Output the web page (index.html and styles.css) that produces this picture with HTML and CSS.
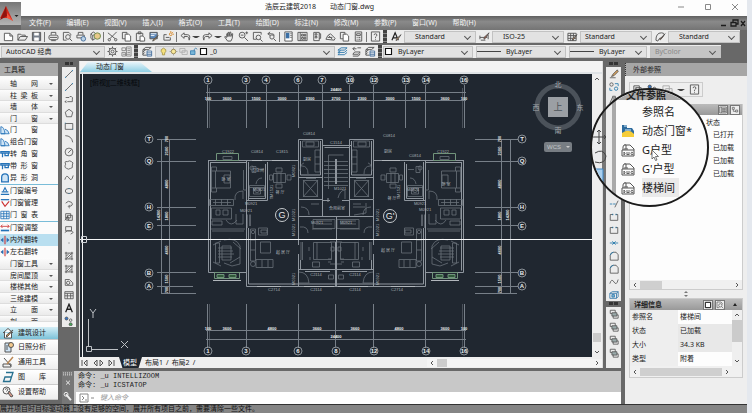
FILE: index.html
```html
<!DOCTYPE html>
<html lang="zh-CN">
<head>
<meta charset="utf-8">
<title>浩辰云建筑2018</title>
<link rel="stylesheet" href="styles.css">
</head>
<body>
<svg class="defs" aria-hidden="true">
<symbol id="new" viewBox="0 0 12 12"><path d="M1.5 2.5h6l3 3v5h-9zM7.5 2.5v3h3" fill="#fff"/></symbol>
<symbol id="open" viewBox="0 0 12 12"><path d="M1 10V3.500h3l1 1h4V6M1 10l2.500-4h8L9 10z"/></symbol>
<symbol id="save" viewBox="0 0 12 12"><path d="M1.500 1.500h9v9h-9z" fill="#77808c"/><path d="M3.500 2h5v3h-5zM3.500 7h5v3.500h-5z" fill="#fff" stroke="none"/></symbol>
<symbol id="print" viewBox="0 0 12 12"><path d="M3.500 4V1.500h5V4M3 4.500h6a2 2 0 0 1 2 2v1a2 2 0 0 1-2 2H3a2 2 0 0 1-2-2v-1a2 2 0 0 1 2-2zM2 7h8M3.500 10.500h5"/></symbol>
<symbol id="preview" viewBox="0 0 12 12"><path d="M5 10H1.500V1.500h6l2 2V5"/><circle cx="6.500" cy="6.500" r="2.500"/><path d="M8.500 8.500l2.500 2.500"/></symbol>
<symbol id="publish" viewBox="0 0 12 12"><path d="M2.500 4V1.500h5V4M1 4.500h8v3H1z"/><circle cx="8" cy="8.500" r="2.500" fill="#bcd2e6" stroke="#456f9c"/></symbol>
<symbol id="globe" viewBox="0 0 12 12"><path d="M1 3l3-2 2 2v5L3 10 1 8zM1 3l2 2v5M3 5l3-2"/><circle cx="8" cy="5.500" r="3.500" fill="#e8c98a" stroke="#6c8a4d"/></symbol>
<symbol id="cut" viewBox="0 0 12 12"><path d="M1 2l8 6.500M10.500 1L3 8.500"/><circle cx="2.500" cy="9.500" r="1.300"/><circle cx="9.500" cy="9.500" r="1.300"/></symbol>
<symbol id="copy" viewBox="0 0 12 12"><path d="M1.500 1.500h5v7h-5z"/><path d="M4.500 3.500h4l2 2v5.500h-6z" fill="#fff"/></symbol>
<symbol id="paste" viewBox="0 0 12 12"><path d="M1.500 2.500h7v8h-7zM3.500 1h3v2h-3z"/><path d="M5.500 5.500h3l2 2V11h-5z" fill="#fff"/></symbol>
<symbol id="match" viewBox="0 0 12 12"><path d="M1 1.500h8v7H1z" fill="#5a86b8"/><path d="M2 3h6M2 5h4" stroke="#fff"/><path d="M10 5L6 10l-2 1 1-2z" fill="#d99b4e"/></symbol>
<symbol id="block" viewBox="0 0 12 12"><path d="M4 4H1v6h7V7M3 7h4"/><circle cx="8.500" cy="3.500" r="1.500" stroke="#d98b2b"/><path d="M8.500 0v1.500M11 3.500h1M10 2l1-1" stroke="#d98b2b"/></symbol>
<symbol id="undo" viewBox="0 0 12 12"><path d="M4.500 2L1 5l3.500 3V6H8q2 0 2 4 2-6-2-6H4.500z"/></symbol>
<symbol id="redo" viewBox="0 0 12 12"><path d="M7.500 2L11 5 7.500 8V6H4Q2 6 2 10 0 4 4 4h3.500z"/></symbol>
<symbol id="pan" viewBox="0 0 12 12"><path d="M4 11L1 7V6l2 1V3l1-.5V6l.5-4.500h1V6L6.500 1l1 .5V6l1-3h1L9 8l-1.500 3z"/></symbol>
<symbol id="zoom" viewBox="0 0 12 12"><circle cx="4.500" cy="4.500" r="3.200"/><path d="M7 7l4 4M3 4.500h3M8 2h3M9.500.5v3"/></symbol>
<symbol id="zoomwin" viewBox="0 0 12 12"><path d="M10 4V1.500H1.500V9H5"/><circle cx="7" cy="7" r="2.500"/><path d="M9 9l2.500 2.500"/></symbol>
<symbol id="prev" viewBox="0 0 12 12"><path d="M4.500 1L2 3l2.500 2M2 3h4q3 0 3 2"/><circle cx="6.500" cy="6.500" r="2.300"/><path d="M8.500 8.500L11 11"/></symbol>
<symbol id="props" viewBox="0 0 12 12"><path d="M2 1h8v10H2z" fill="#fff"/><path d="M3 2h4v6H3z" fill="#3b6fa5" stroke="none"/><path d="M8 3h1.500M8 5h1.500M8 7h1.500"/></symbol>
<symbol id="grid" viewBox="0 0 12 12"><path d="M1 1.500h10v9H1zM3.500 1.500v9M5 3.500h2v2H5zM8 3.500h1.500v2H8zM5 7h2v2H5zM8 7h1.500v2H8z"/></symbol>
<symbol id="palette" viewBox="0 0 12 12"><path d="M3 1.500h6v9H3zM4.500 3h2v1.500h-2zM4.500 6h2v1.500h-2zM9 3h1.500v5H9"/></symbol>
<symbol id="sheet" viewBox="0 0 12 12"><path d="M1 9l2-4 3-2 5 5-1 2zM4 5l4 4M3 7h5"/></symbol>
<symbol id="calc" viewBox="0 0 12 12"><path d="M2.500 1h7v10h-7zM4 3h4v2H4zM4 7h1M6 7h2M4 9h1M6 9h2"/></symbol>
<symbol id="help" viewBox="0 0 12 12"><path d="M1.500 1h9v10h-9zM4.500 4.500q0-1.500 1.500-1.500t1.500 1.500Q7.500 5.500 6 6.500V7.500M6 8.500v1"/></symbol>
<symbol id="stylea" viewBox="0 0 12 12"><path d="M1 10L4.500 2 8 10M2 7.500h5" stroke="#222" stroke-width="1.300"/><path d="M11 4L7 9.500l-1.500 1 .5-2z" fill="#d89a61"/></symbol>
<symbol id="dim" viewBox="0 0 12 12"><path d="M1 9V5M1 7h8M10 4v5M2 10h5"/><path d="M11 2L7 8l-1.500 1V7z" fill="#b9583d"/></symbol>
<symbol id="tbl" viewBox="0 0 12 12"><path d="M1 2.500h9v8H1zM1 5h9M1 8h9M4 2.500v8M7 2.500v8"/><path d="M11 4L7 9.500l-1 1v-2z" fill="#d89a61"/></symbol>
<symbol id="leader" viewBox="0 0 12 12"><path d="M1 10q0-8 6-8 3 0 3 2Q8 9 5 8L3 11z"/><path d="M11 3L6 9.500 5 9z" fill="#b96b3d"/></symbol>
<symbol id="gear" viewBox="0 0 12 12"><circle cx="6" cy="6" r="3.800"/><circle cx="6" cy="6" r="1.600"/><path d="M6 .5v2M6 9.500v2M.5 6h2M9.500 6h2M2 2l1.500 1.500M8.500 8.500L10 10M10 2L8.500 3.500M2 10l1.500-1.500"/></symbol>
<symbol id="ws" viewBox="0 0 12 12"><path d="M1 2h4v3H1zM6 1h5v10H6zM1 7h4v4H1zM7 3h3M7 5h3M7 7h3M2 9h8" stroke="#888"/></symbol>
<symbol id="layers" viewBox="0 0 12 12"><path d="M1 4l3-2.500h6L7 4zM1 6.500L4 4M1 9l2-2M1 4v6h4"/><path d="M5.500 5.500h5v5.500h-5zM5.500 7.500h5M5.500 9.500h5" fill="#fff" stroke="#456f9c"/></symbol>
<symbol id="stack" viewBox="0 0 12 12"><path d="M1 4.500L4.500 2H11L8 4.500zM1 7l3-2M8 7l3-2.500M1 7h7M1 9.500h7L11 7M1 9.500l2-2" stroke="#2f78ac"/></symbol>
<symbol id="stackp" viewBox="0 0 12 12"><path d="M4 1L2 3l2 2M2 3h4M4 6.500h6L8 9H2zM2 11h6l2-2.500M7 2h4"/></symbol>
<symbol id="bulb" viewBox="0 0 12 12"><path d="M4.500 8Q2 6 3 3.500q3-4 6 0Q10 6 7.500 8v2.500h-3z" fill="#f5e07c" stroke="#9b8b40"/></symbol>
<symbol id="sun" viewBox="0 0 12 12"><circle cx="6" cy="6" r="3" fill="#f8e79a" stroke="#87753b"/><path d="M6 1v1M6 10v1M1 6h1M10 6h1"/></symbol>
<symbol id="frz" viewBox="0 0 12 12"><path d="M1 2h7v5H1zM4 5h7v5H4z" stroke="#aaa"/></symbol>
<symbol id="lock" viewBox="0 0 12 12"><path d="M2 5h6v5H2z" fill="#77b5d8" stroke="#2f78ac"/><path d="M7 5V3q2-3 4 0" stroke="#2f78ac"/></symbol>
<symbol id="sq" viewBox="0 0 12 12"><path d="M2 2h8v8H2z" fill="#fff" stroke="#111" stroke-width="1.500"/></symbol>
<symbol id="tree" viewBox="0 0 12 12"><path d="M2 2h3v3H2zM7 6h3v3H7zM3.500 5v3H7"/></symbol>
<symbol id="line" viewBox="0 0 12 12"><path d="M2 10L10 2"/><path d="M1.500 10h1M9.500 2h1" stroke="#27a" stroke-width="1.500"/></symbol>
<symbol id="pline" viewBox="0 0 12 12"><path d="M2 3h4a2 2 0 0 1 4 2v3H4"/><path d="M3 7l-2 1 2 1"/></symbol>
<symbol id="poly" viewBox="0 0 12 12"><path d="M6 1.500l4.500 3.500L9 10.500H3L1.500 5z"/></symbol>
<symbol id="rect" viewBox="0 0 12 12"><path d="M1.500 3h9v7h-9z"/><path d="M1 2.500h1M10 10h1" stroke="#27a"/></symbol>
<symbol id="arc" viewBox="0 0 12 12"><path d="M1.500 2Q9 2 10.500 10"/></symbol>
<symbol id="circle" viewBox="0 0 12 12"><circle cx="6" cy="6" r="4.700"/><path d="M5 7l4-4"/></symbol>
<symbol id="cloud" viewBox="0 0 12 12"><path d="M2 5Q0 1 4 2q3-2 5 0 3 1 1 4 1 4-2 4-3 2-5 0-3-1-1-5z"/></symbol>
<symbol id="spline" viewBox="0 0 12 12"><path d="M1 8Q3 1 6 6t5-3"/></symbol>
<symbol id="ell" viewBox="0 0 12 12"><ellipse cx="6" cy="6" rx="4.500" ry="3"/><path d="M6 2.500v1M6 8.500v1" stroke="#27a"/></symbol>
<symbol id="ellarc" viewBox="0 0 12 12"><path d="M2 5q3-4 7-1 3 4-3 5M7 7L5 9l2 2"/></symbol>
<symbol id="ins" viewBox="0 0 12 12"><path d="M2 2h6v5H2zM4 4h6v6H5zM1 10l4-5"/><circle cx="4" cy="8" r="2"/></symbol>
<symbol id="mkb" viewBox="0 0 12 12"><path d="M2 2h7v5H2zM1 9l3-2h5l2 2-3 2"/></symbol>
<symbol id="dot" viewBox="0 0 12 12"><path d="M5.500 6h1" stroke-width="1.300"/></symbol>
<symbol id="hatch" viewBox="0 0 12 12"><path d="M1 2.500h10M1 9.500h10M2.500 1v10M9.500 1v10M3 6l3-3M3 9l6-6M6 9l3-3"/></symbol>
<symbol id="region" viewBox="0 0 12 12"><path d="M1.500 10V3h5l4 4v3z"/><circle cx="5" cy="7" r="2"/></symbol>
<symbol id="table" viewBox="0 0 12 12"><path d="M1 2h10v8.500H1zM1 4h10M1 7h10M4 4v6.500M8 4v6.500" /></symbol>
<symbol id="aa" viewBox="0 0 12 12"><path d="M2 11L6 1.500 10 11M3.500 7.500h5" stroke="#222" stroke-width="1.600"/></symbol>
<symbol id="pts" viewBox="0 0 12 12"><circle cx="3" cy="3" r="1.800" fill="#37c"/><circle cx="8" cy="5" r="1.500"/><circle cx="8" cy="10" r="1.800" fill="#4a5"/></symbol>
<symbol id="erase" viewBox="0 0 12 12"><path d="M10 1L5 6 3 9l3-1 5-5z" fill="#d9a25c"/><path d="M1 10.500h7"/></symbol>
<symbol id="cpy" viewBox="0 0 12 12"><circle cx="3" cy="3" r="2"/><circle cx="8.500" cy="8" r="2" stroke="#27a"/><path d="M7 2h4v3M1 7v3h3" stroke="#27a"/></symbol>
<symbol id="mir" viewBox="0 0 12 12"><path d="M5 1v9H1zM7 1v9h4z"/></symbol>
<symbol id="trim" viewBox="0 0 12 12"><path d="M1 6h3M5 6h3" stroke="#27a"/><path d="M11 2L7 10"/></symbol>
<symbol id="brk" viewBox="0 0 12 12"><path d="M5 3H1.500v7h9V3H8"/><path d="M4 3h1M8 3h1" stroke="#27a" stroke-width="2"/></symbol>
<symbol id="join" viewBox="0 0 12 12"><path d="M1 6h10M4 4l2 2-2 2M8 4L6 6l2 2" stroke="#27a"/></symbol>
<symbol id="fil" viewBox="0 0 12 12"><path d="M1.500 11V5q1-3.500 4-3.500h3l2.500 3V11z"/><path d="M1.500 5q1-3.500 4-3.500" stroke="#27a"/></symbol>
<symbol id="cube" viewBox="0 0 12 12"><path d="M1 4l3-2h7v6l-2 2H1zM1 4h8v6M9 4l2-2" stroke="#37a"/><path d="M3.500 5.500h3v3h-3z" fill="#7bd" stroke="#37a"/></symbol>
<symbol id="ord" viewBox="0 0 12 12"><path d="M1.500 1.500h6v4h-6z"/><path d="M3.500 4.500h6v4h-6z" fill="#9aa"/><path d="M5 8v3h6V7H9.500"/></symbol>
<symbol id="door" viewBox="0 0 12 12"><path d="M1 10.500V2q4 0 5 8.500zM6 5q4 1 5 5.500H1" stroke="#2472b8" fill="#cfe4f5"/></symbol>
<symbol id="win" viewBox="0 0 12 12"><path d="M1 3h10v2H1zM3 5v5M6 5v3h4V5" stroke="#2472b8" stroke-width="1.500"/></symbol>
<symbol id="arch" viewBox="0 0 12 12"><path d="M2 10.500V5q0-4 4-4t4 4v5.500z" stroke="#2472b8" stroke-width="1.500" fill="#cfe4f5"/></symbol>
<symbol id="num" viewBox="0 0 12 12"><path d="M1 10h10M2 7h8M4 6l2-4 2 4" stroke="#2472b8" stroke-width="1.300"/></symbol>
<symbol id="chk" viewBox="0 0 12 12"><path d="M1 2h10" stroke="#2472b8" stroke-width="1.500"/><path d="M2 4l4 6 5-6" stroke="#c33" stroke-width="1.400"/></symbol>
<symbol id="wt" viewBox="0 0 12 12"><path d="M1 1.500h10v9H1zM1 4.500h10M1 7.500h10M4.500 1.500v9M8 1.500v9" stroke="#2472b8"/></symbol>
<symbol id="adj" viewBox="0 0 12 12"><path d="M1 4h10M3 2L1 4l2 2M9 2l2 2-2 2" stroke="#c33"/><path d="M1 9h10" stroke="#2472b8" stroke-width="2"/></symbol>
<symbol id="flip" viewBox="0 0 12 12"><path d="M6 1v10M1 6h3M8 6h3" stroke="#c33" stroke-width="1.300"/><path d="M4 3v6L1 6zM8 3v6l3-3z" fill="#2472b8" stroke="none"/></symbol>
<symbol id="house" viewBox="0 0 12 12"><path d="M1 6l5-4.500L11 6M2.500 5v6h7V5" fill="#fff"/><path d="M11 3L6 9l-1.500 1V8z" fill="#e2a04d"/></symbol>
<symbol id="sunl" viewBox="0 0 12 12"><path d="M3 2h6v9H3zM5 4v5" fill="#cfe4f5"/><circle cx="9" cy="4" r="2.500" fill="#f4c98c"/></symbol>
<symbol id="tool" viewBox="0 0 12 12"><path d="M1 8h8v3H1zM2 2l7 8"/><path d="M11 1L5 8" stroke="#b85" stroke-width="1.500"/></symbol>
<symbol id="lib" viewBox="0 0 12 12"><path d="M4 1.500h7L8 10.500H1.500L3 6h6" stroke="#27708f" stroke-width="1.300"/></symbol>
<symbol id="hlp" viewBox="0 0 12 12"><circle cx="4.500" cy="4.500" r="3.500"/><path d="M3 3.500q2-2 3 0l-1.500 2"/><path d="M7 5l4 5-2 1-3-4z" fill="#d98"/></symbol>
<symbol id="dwg" viewBox="0 0 14 14"><path d="M2 7V4q0-2 2-2V1M4 2h5l4 4v7H1V7h12M5 2v4M3 6h4"/><path d="M3 9v3M3 9q2 1.500 0 3M6 9v3l1-1 1 1V9M12 9.500q-2-1-2 1t2 1v-1" stroke-width=".9"/></symbol>
<symbol id="proj" viewBox="0 0 14 14"><path d="M1 1h5v3h5l2 3v6H1z" fill="#2d6b9d" stroke="none"/><path d="M1 9q7-5 12 1v3H1z" fill="#f6cd3a" stroke="none"/><path d="M3 2h3M4 6h6" stroke="#d9edf9"/></symbol>
</svg>

<div class="app">
<header class="head">
  <button class="logo" aria-label="A"><svg viewBox="0 0 21 24"><path d="M0 15L6 3l7 15-4-3z" fill="#d42a1c"/><path d="M6 3l1 10-7 4 4-9z" fill="#8f140f"/><path d="M7 10l6 8-6-3z" fill="#f5543c"/><path d="M14.500 12h4l-2 2z" fill="#222"/></svg></button>
  <div class="title"><span>浩辰云建筑2018</span><span>动态门窗.dwg</span>
    <div class="wctl"><button aria-label="最小化"><svg viewBox="0 0 8 8"><path d="M1 4h6"/></svg></button><button aria-label="最大化"><svg viewBox="0 0 8 8"><path d="M1.500 1.500h5v5h-5z"/></svg></button><button aria-label="关闭"><svg viewBox="0 0 8 8"><path d="M1 1l6 6M7 1L1 7"/></svg></button></div>
  </div>
  <nav class="menu"><div class="items"><button>文件(F)</button><button>编辑(E)</button><button>视图(V)</button><button>插入(I)</button><button>格式(O)</button><button>工具(T)</button><button>绘图(D)</button><button>标注(N)</button><button>修改(M)</button><button>参数(P)</button><button>窗口(W)</button><button>帮助(H)</button></div>
    <div class="dctl"><svg viewBox="0 0 28 8"><path d="M2 6.500h5M12 3.500h5v3.500h-5zM14 3V1h5v4h-2M22 2l4 5M26 2l-4 5"/></svg></div></nav>
</header>

<div class="bar one">
  <button class="ib" aria-label="新建"><svg><use href="#new"/></svg></button><button class="ib" aria-label="打开"><svg><use href="#open"/></svg></button><button class="ib" aria-label="保存"><svg><use href="#save"/></svg></button><i class="sep"></i>
  <button class="ib" aria-label="打印"><svg><use href="#print"/></svg></button><button class="ib" aria-label="预览"><svg><use href="#preview"/></svg></button><button class="ib" aria-label="发布"><svg><use href="#publish"/></svg></button><button class="ib" aria-label="三维"><svg><use href="#globe"/></svg></button><i class="sep"></i>
  <button class="ib" aria-label="剪切"><svg><use href="#cut"/></svg></button><button class="ib" aria-label="复制"><svg><use href="#copy"/></svg></button><button class="ib" aria-label="粘贴"><svg><use href="#paste"/></svg></button><button class="ib" aria-label="特性匹配"><svg><use href="#match"/></svg></button><button class="ib" aria-label="块编辑"><svg><use href="#block"/></svg></button><i class="sep"></i>
  <button class="ib" aria-label="放弃"><svg><use href="#undo"/></svg></button><b class="dd"></b><button class="ib" aria-label="重做"><svg><use href="#redo"/></svg></button><b class="dd"></b>
  <button class="ib" aria-label="平移"><svg><use href="#pan"/></svg></button><button class="ib" aria-label="缩放"><svg><use href="#zoom"/></svg></button><button class="ib" aria-label="窗口缩放"><svg><use href="#zoomwin"/></svg></button><button class="ib" aria-label="上一个"><svg><use href="#prev"/></svg></button><i class="sep"></i>
  <button class="ib" aria-label="特性"><svg><use href="#props"/></svg></button><button class="ib" aria-label="设计中心"><svg><use href="#grid"/></svg></button><button class="ib" aria-label="工具选项板"><svg><use href="#palette"/></svg></button><button class="ib" aria-label="图纸集"><svg><use href="#sheet"/></svg></button><button class="ib" aria-label="标记集"><svg><use href="#copy"/></svg></button><button class="ib" aria-label="计算器"><svg><use href="#calc"/></svg></button><i class="sep"></i><button class="ib" aria-label="帮助"><svg><use href="#help"/></svg></button>
  <i class="grip"></i>
  <button class="ib wide" aria-label="文字样式"><svg><use href="#stylea"/></svg></button><label class="combo c72"><select aria-label="文字样式" class="in"><option>Standard</option></select></label>
  <button class="ib wide" aria-label="标注样式"><svg><use href="#dim"/></svg></button><label class="combo c72"><select aria-label="标注样式" class="in"><option>ISO-25</option></select></label>
  <button class="ib wide" aria-label="表格样式"><svg><use href="#tbl"/></svg></button><label class="combo c72"><select aria-label="表格样式"><option>Standard</option></select></label>
  <button class="ib wide" aria-label="引线样式"><svg><use href="#leader"/></svg></button><label class="combo c72"><select aria-label="引线样式" class="in"><option>Standard</option></select></label>
</div>
<div class="bar two">
  <label class="combo c104"><select aria-label="工作空间"><option>AutoCAD 经典</option></select></label>
  <button class="ib" aria-label="工作空间设置"><svg><use href="#gear"/></svg></button><button class="ib" aria-label="我的工作空间"><svg><use href="#ws"/></svg></button><i class="grip"></i>
  <button class="ib wide" aria-label="图层特性"><svg><use href="#layers"/></svg></button>
  <label class="combo layer"><svg><use href="#bulb"/></svg><svg><use href="#sun"/></svg><svg><use href="#frz"/></svg><svg><use href="#lock"/></svg><svg><use href="#sq"/></svg><select aria-label="图层"><option>_0</option></select></label>
  <button class="ib" aria-label="图层置为当前"><svg><use href="#stack"/></svg></button><button class="ib" aria-label="上一个图层"><svg><use href="#stackp"/></svg></button><button class="ib" aria-label="图层状态"><svg><use href="#layers"/></svg></button><i class="grip"></i>
  <label class="combo c90"><svg><use href="#sq"/></svg><select aria-label="颜色"><option>ByLayer</option></select></label>
  <label class="combo c90"><i class="rule"></i><select aria-label="线型"><option>ByLayer</option></select></label>
  <label class="combo c80"><i class="rule"></i><select aria-label="线宽"><option>ByLayer</option></select></label>
  <label class="combo c68 off"><select aria-label="打印样式" disabled><option>ByColor</option></select></label>
</div>

<main class="main">
<aside class="tools">
  <h2>工具箱</h2>
  <button class="g">轴 网</button><button class="g">柱 梁 板</button><button class="g">墙 体</button><button class="g">门 窗</button>
  <div class="set"><button><svg><use href="#door"/></svg><span>门 窗</span></button><button><svg><use href="#door"/></svg><span>组合门窗</span></button><button><svg><use href="#win"/></svg><span>转 角 窗</span></button><button><svg><use href="#win"/></svg><span>带 形 窗</span></button><button><svg><use href="#arch"/></svg><span>异 形 洞</span></button></div>
  <div class="set"><button><svg><use href="#num"/></svg><span>门窗编号</span></button><button><svg><use href="#chk"/></svg><span>门窗管理</span></button><button><svg><use href="#wt"/></svg><span>门 窗 表</span></button></div>
  <div class="set last"><button><svg><use href="#adj"/></svg><span>门窗调整</span></button><button class="on"><svg><use href="#flip"/></svg><span>内外翻转</span></button><button><svg><use href="#flip"/></svg><span>左右翻转</span></button></div>
  <button class="g">门窗工具</button><button class="g">房间屋顶</button><button class="g">楼梯其他</button><button class="g">三维建模</button><button class="g">立 面</button><button class="g cut">剖 面</button>
  <div class="cats"><button class="on"><svg><use href="#house"/></svg><span>建筑设计</span></button><button><svg><use href="#sunl"/></svg><span>日照分析</span></button><button><svg><use href="#tool"/></svg><span>通用工具</span></button><button><svg><use href="#lib"/></svg><span>图 库</span></button><button><svg><use href="#hlp"/></svg><span>设置帮助</span></button></div>
</aside>

<section class="center">
 <div class="work">
  <div class="vbar"><i class="vgrip"></i><div class="vset">
   <button aria-label="直线"><svg><use href="#line"/></svg></button><button aria-label="构造线"><svg><use href="#line"/></svg></button><button aria-label="多段线"><svg><use href="#pline"/></svg></button><button aria-label="多边形"><svg><use href="#poly"/></svg></button><button aria-label="矩形"><svg><use href="#rect"/></svg></button><button aria-label="圆弧"><svg><use href="#arc"/></svg></button><button aria-label="圆"><svg><use href="#circle"/></svg></button><button aria-label="修订云线"><svg><use href="#cloud"/></svg></button><button aria-label="样条曲线"><svg><use href="#spline"/></svg></button><button aria-label="椭圆"><svg><use href="#ell"/></svg></button><button aria-label="椭圆弧"><svg><use href="#ellarc"/></svg></button><button aria-label="插入块"><svg><use href="#ins"/></svg></button><button aria-label="创建块"><svg><use href="#mkb"/></svg></button><button aria-label="点"><svg><use href="#dot"/></svg></button><button aria-label="图案填充"><svg><use href="#hatch"/></svg></button><button aria-label="渐变色"><svg><use href="#hatch"/></svg></button><button aria-label="面域"><svg><use href="#region"/></svg></button><button aria-label="表格"><svg><use href="#table"/></svg></button><button aria-label="多行文字"><svg><use href="#aa"/></svg></button><button aria-label="添加选定"><svg><use href="#pts"/></svg></button>
  </div></div>
  <div class="doc">
   <div class="tabs"><button>动态门窗</button></div>
   <div class="view">
   <svg class="cad" viewBox="80 74 512 283">
    <defs>
    <g id="half">
     <g class="ax"><path d="M207.500 85v43M246.500 85v43M266.500 85v43M298.500 85v43M322.500 85v43M207.500 304v44M246.500 304v44M298.500 304v44"/><path d="M209.500 88v40M209.500 304v44" class="dimmer"/>
     <circle cx="208" cy="80" r="4"/><circle cx="246" cy="80" r="4"/><circle cx="266" cy="80" r="4"/><circle cx="298" cy="80" r="4"/><circle cx="322" cy="80" r="4"/><circle cx="208" cy="351" r="4"/><circle cx="246" cy="351" r="4"/><circle cx="298" cy="351" r="4"/>
     <path d="M206 92.500H336M206 100.500H336M206 330.500H336M206 339.500H336"/></g>
     <g class="wall"><path d="M208.500 160V272.500H246.500V286.500H336M210.500 162V270.500M208 160.500H298.500V139.500H322.500V177M210 162.500H246M246.500 160V286M248.500 162V201M248.500 228V284H336M267.500 162V200.500H246M265.500 164V198.500H248M298.500 160V177.500H322.500V199.500H298.500V177M300.500 141V175H320.500V141M298.500 200V245M298.500 254V286M300.500 260V270M298.500 269.500H336M305 271.500H330M322.500 199V216M298 216.500H336M322 200.500H330M247 214.500V228M250 214.500V226"/></g>
     <g class="thin"><path d="M303.500 180.500h14v16h-14zM303 180l15 17M318 180l-15 17M306 178.500h10"/>
      <path d="M211.500 171h19v17h-19zM215.500 171v17M211.500 171v-4h5v4M211.500 188v4h5v-4M224 175h6v8h-6zM243.500 170v20h3M209.500 199.500h24v6h-24zM215.500 199v6M221.500 199v6M227.500 199v6M213 202.500h18M235 200q-1-9 8-9v8M211.500 208h20v11h-20zM216 210h4v5h-4zM223 210h5v5h-5z"/>
      <path d="M252 166.500h4v6h-4zM258 169.500h6M262 178q-5 0-6 6M249.500 185.500h15v11h-15zM253.500 188h7v6h-7zM265 187.500h-16"/><circle cx="252" cy="168" r="2"/><circle cx="257" cy="190" r="2.500"/>
      <path d="M273.500 173.500h12v9h-12zM276 168h6v4h-6zM276 184h6v4h-6zM269.500 175h3v5h-3zM287 175h4v5h-4zM277 173v10M281 173v10"/>
      <path d="M302.500 141h16v6h-16zM306 142h8v4h-8zM315 150h5v22h-5zM315 157h5M315 164h5M304 163q-3 0-4 8M302 166q6 0 6 8M301 207q8 0 8 8M311 204h8"/>
      <path d="M211 229h34M212 231h32M215.500 243h4v20h-4zM222 246h9v14h-9zM218 248h14M218 251h15M218 254h16M218 257h14M224 240q12-3 16 6v18l-8 2-8-3M233 242l8 7M230 263l10-6M213 262l8 4M213 245l8-4M212 221h10v4h-10zM226 220q5 8 11 0M236 214v10h7v-10"/>
      <path d="M250.500 229h5v32h-5zM250 240h5M250 250h5M258.500 228h9v7h-9zM261 230h6v3h-6zM260.500 242h10v11h-10zM256 259.500h17v8h-17zM262 260v7M268 260v7"/><circle cx="253" cy="264" r="2.500"/><circle cx="253" cy="232" r="1.700"/>
      <path d="M313.500 242.500h18v17h-18zM317 242v17M301 242v18M302.500 242v18M309 247v4M300 227q8-1 8 6M312 229h20M313 219.500h22v9h-22zM316 221h16M316 224h16M310 257v3M299 272q9 0 10 11M299 283h10M312.500 262h7v5h-7zM330 242h6v22h-6M331 247h3v4h-3z"/><path d="M328 262h3M328 259h4M328.500 275h5v4h-5z"/></g>
     <path d="M216.500 153.500h22v7h-22z" class="green"/><path d="M223 156.500h9v3h-9z" class="thin"/>
     <path d="M214.500 272.500h25v6h-25z" class="green"/><path d="M217 274.500h7v3h-7zM229 274.500h7v3h-7z" class="green fill"/><path d="M213 280.500h28M272 160.500h18M252 160.500h10M257 286.500h24M304 286.500h30" class="bright"/>
    </g>
    </defs>
    <use href="#half"/><use href="#half" transform="translate(672 0) scale(-1 1)"/>
    <g class="wall"><path d="M322.500 145.500H351.500V160M324.500 147.500H349.500V200M322.500 177V200M328 202v-4M336.500 286V216M335.500 242V286"/></g>
    <g class="thin"><path d="M324 161.500h24M324 165.500h24M324 169.500h24M324 173.500h24M324 177.500h24M324 181.500h24M324 185.500h24M328.500 155v34M343.500 155h-15"/><path d="M336 159v25" class="core"/><path d="M338 198q2-8 7-8v9M353 207h12M366 203v10l-12 2"/></g>
    <g class="ax">
     <path d="M157 139.500h39M157 161.500h39M157 207.500h39M157 225.500h39M157 272.500h39M157 286.500h36M161 293.500h35M161.500 139v154M169.500 139v154M475 139.500h43M475 161.500h43M475 207.500h43M475 225.500h43M475 272.500h43M475 286.500h43M475 293.500h42M501.500 139v154M510.500 139v154"/>
     <circle cx="149" cy="139" r="4"/><circle cx="149" cy="161" r="4"/><circle cx="149" cy="207" r="4"/><circle cx="149" cy="226" r="4"/><circle cx="149" cy="273" r="4"/><circle cx="149" cy="286" r="4"/><circle cx="522" cy="139" r="4"/><circle cx="522" cy="161" r="4"/><circle cx="522" cy="207" r="4"/><circle cx="522" cy="226" r="4"/><circle cx="522" cy="273" r="4"/><circle cx="522" cy="286" r="4"/><circle cx="336" cy="351" r="4"/><path d="M335.500 304v44"/></g>
    <g class="bub"><text x="208" y="82">1</text><text x="246" y="82">3</text><text x="266" y="82">4</text><text x="298" y="82">6</text><text x="322" y="82">7</text><text x="350" y="82">10</text><text x="374" y="82">12</text><text x="406" y="82">13</text><text x="426" y="82">14</text><text x="464" y="82">16</text><text x="208" y="353">1</text><text x="246" y="353">3</text><text x="298" y="353">6</text><text x="336" y="353">8</text><text x="374" y="353">12</text><text x="426" y="353">14</text><text x="464" y="353">16</text>
     <text x="149" y="141">T</text><text x="149" y="163">Q</text><text x="149" y="209">H</text><text x="149" y="228">E</text><text x="149" y="275">B</text><text x="149" y="288">A</text><text x="522" y="141">T</text><text x="522" y="163">Q</text><text x="522" y="209">H</text><text x="522" y="228">E</text><text x="522" y="275">B</text><text x="522" y="288">A</text></g>
    <g class="num"><text x="336" y="91">24400</text><text x="208" y="100">100</text><text x="227" y="100">3600</text><text x="256" y="100">1500</text><text x="282" y="100">3000</text><text x="310" y="100">2300</text><text x="336" y="100">2700</text><text x="362" y="100">2300</text><text x="390" y="100">3000</text><text x="416" y="100">1500</text><text x="445" y="100">3600</text><text x="464" y="100">100</text>
     <text x="208" y="330">100</text><text x="227" y="330">3600</text><text x="272" y="330">4800</text><text x="317" y="330">3660</text><text x="355" y="330">3660</text><text x="399" y="330">4800</text><text x="445" y="330">3600</text><text x="464" y="330">100</text><text x="336" y="338">24400</text>
     <text transform="translate(168 139) rotate(-90)">700</text><text transform="translate(168 151) rotate(-90)">2100</text><text transform="translate(168 184) rotate(-90)">4800</text><text transform="translate(168 216) rotate(-90)">1800</text><text transform="translate(160 215) rotate(-90)">14200</text><text transform="translate(168 250) rotate(-90)">4600</text><text transform="translate(168 279) rotate(-90)">1500</text><text transform="translate(168 290) rotate(-90)">700</text>
     <text transform="translate(501 139) rotate(-90)">700</text><text transform="translate(501 151) rotate(-90)">2100</text><text transform="translate(501 184) rotate(-90)">4800</text><text transform="translate(501 216) rotate(-90)">1800</text><text transform="translate(509 215) rotate(-90)">14200</text><text transform="translate(501 250) rotate(-90)">4600</text><text transform="translate(501 279) rotate(-90)">1500</text><text transform="translate(501 290) rotate(-90)">700</text></g>
    <g class="tag"><text x="228" y="153">C1922</text><text x="257" y="153">C0814</text><text x="282" y="153">C1815</text><text x="309" y="135">C0814</text><text x="336" y="144">C1514</text><text x="389" y="137">C0814</text><text x="415" y="157">C0814</text><text x="443" y="153">C1922</text><text x="251" y="205">M0921</text><text x="246" y="212">M0921</text><text x="259" y="191">M0821</text><text x="258" y="172">卫生间</text><text x="307" y="161">厨房</text><text x="388" y="153">厨房</text><text x="226" y="181">卧 室</text><text x="446" y="186">卧 室</text><text x="283" y="254">起 居 厅</text><text x="388" y="252">起 居 厅</text><text x="280" y="194">餐 厅</text><text x="392" y="200">餐 厅</text><text x="337" y="210">合用前室</text><text x="340" y="190">M1021</text><text x="413" y="191">M0821</text><text x="420" y="205">M0921</text><text x="425" y="211">M0921</text><text x="317" y="224">M0921</text><text x="346" y="224">M0921</text><text x="274" y="291">C2714</text><text x="316" y="291">C2114</text><text x="355" y="291">C2114</text><text x="397" y="291">C2714</text><text x="316" y="276">C2114</text><text x="355" y="276">C2114</text>
     <text transform="translate(295 171) rotate(-90)">M0821</text><text transform="translate(273 192) rotate(-90)">TM1521</text><text transform="translate(400 192) rotate(-90)">TM1521</text><text transform="translate(295 215) rotate(-90)">M1021</text><text transform="translate(295 230) rotate(-90)">M1021</text><text transform="translate(295 279) rotate(-90)">M0921</text><text transform="translate(379 215) rotate(-90)">M1021</text><text transform="translate(379 230) rotate(-90)">M1021</text><text transform="translate(379 279) rotate(-90)">M0921</text></g>
    <g class="unit"><circle cx="282" cy="215" r="6.500"/><circle cx="390" cy="216" r="6.500"/><text x="282" y="218">G</text><text x="390" y="219">G'</text></g>
    <text x="90" y="85" class="vp">[俯视][二维线框]</text>
    <g class="compass"><circle cx="558" cy="107" r="21"/><path d="M548 97h20v20h-20z"/><text x="558" y="110" class="up">上</text><text x="558" y="87">北</text><text x="558" y="133">南</text><text x="536" y="110">西</text><text x="580" y="110">东</text><rect x="544" y="142" width="28" height="10" rx="2"/><text x="554" y="149" class="wcs">WCS</text><path d="M566 146h4l-2 2z" class="tri"/></g>
    <g class="ucs"><path d="M88.500 346V319M91 349.500h27M86.500 346.500h5v5h-5zM90 309l3 4 3-4M93 313v5M121 341l7 7M128 341l-7 7"/></g>
    <path d="M80 239.500H592M82.500 74V357" class="cross"/><path d="M81.500 236.500h5v6h-5z" class="pick"/>
   </svg>
   <div class="sv"><svg viewBox="0 0 10 10"><path d="M3 6l2-2 2 2"/></svg><i></i><svg viewBox="0 0 10 10"><path d="M3 4l2 2 2-2"/></svg></div>
   </div>
   <div class="sheets"><svg viewBox="0 0 36 8"><path d="M2 1v6M7 1L4 4l3 3zM17 1l-3 3 3 3zM20 1l3 3-3 3zM29 1l3 3-3 3zM34 1v6"/></svg><button class="on">模型</button><button>布局1</button><span>/</span><button>布局2</button><span>/</span><div class="sh"><svg viewBox="0 0 10 8"><path d="M6 2L4 4l2 2"/></svg><i></i><svg viewBox="0 0 10 8"><path d="M4 2l2 2-2 2"/></svg></div></div>
  </div>
  <div class="vbar r"><i class="vgrip"></i><div class="vset">
   <button aria-label="删除"><svg><use href="#erase"/></svg></button><button aria-label="复制对象"><svg><use href="#cpy"/></svg></button><button aria-label="镜像"><svg><use href="#mir"/></svg></button><button aria-label="偏移"><svg><use href="#arc"/></svg></button><button aria-label="阵列"><svg><use href="#grid"/></svg></button><button aria-label="移动"><svg><use href="#join"/></svg></button><button aria-label="旋转"><svg><use href="#circle"/></svg></button><button aria-label="缩放对象"><svg><use href="#rect"/></svg></button><button aria-label="拉伸"><svg><use href="#rect"/></svg></button><button aria-label="修剪"><svg><use href="#trim"/></svg></button><button aria-label="延伸"><svg><use href="#trim"/></svg></button><button aria-label="打断于点"><svg><use href="#brk"/></svg></button><button aria-label="打断"><svg><use href="#brk"/></svg></button><button aria-label="合并"><svg><use href="#join"/></svg></button><button aria-label="倒角"><svg><use href="#fil"/></svg></button><button aria-label="圆角"><svg><use href="#fil"/></svg></button><button aria-label="光顺曲线"><svg><use href="#spline"/></svg></button><button aria-label="分解"><svg><use href="#cube"/></svg></button></div>
   <i class="vgrip"></i><div class="vset grow"><button aria-label="前置"><svg><use href="#ord"/></svg></button><button aria-label="后置"><svg><use href="#ord"/></svg></button><button aria-label="置于上方"><svg><use href="#ord"/></svg></button><button aria-label="置于下方"><svg><use href="#ord"/></svg></button></div></div>
 </div>
 <div class="cmd"><div class="side"><svg viewBox="0 0 12 34"><path d="M1 2h10M1 4h10" stroke-dasharray="1 1"/><path d="M4 10l4 4M8 10l-4 4"/><path d="M4 24l5 6" stroke-width="2"/><circle cx="4" cy="24" r="2"/></svg></div>
  <div class="log"><pre>命令: _u INTELLIZOOM
命令: _u ICSTATOP</pre><label class="prompt"><svg viewBox="0 0 16 10"><path d="M1 1h8v8H1zM3 3l2 2-2 2M6 7h2M12 5h3"/></svg><input aria-label="命令" placeholder="键入命令"></label></div></div>
</section>

<aside class="refs">
 <h2>外部参照</h2>
 <div class="rbar"><button aria-label="附着"><svg><use href="#ins"/></svg></button><button aria-label="刷新"><svg><use href="#pts"/></svg></button><button aria-label="更改路径"><svg><use href="#frz"/></svg></button><b class="dd"></b><button aria-label="帮助"><svg><use href="#help"/></svg></button></div>
 <div class="list">
  <div class="cap"><button aria-label="列表"><svg><use href="#grid"/></svg></button><button aria-label="树状图"><svg><use href="#tree"/></svg></button></div>
  <table><thead><tr><th>状态</th></tr></thead><tbody><tr><td>已打开</td></tr><tr><td>已加载</td></tr><tr><td>已加载</td></tr><tr><td>已加载</td></tr></tbody></table>
  <div class="hs"><svg viewBox="0 0 10 8"><path d="M6 2L4 4l2 2"/></svg><i></i><svg viewBox="0 0 10 8"><path d="M4 2l2 2-2 2"/></svg></div>
 </div>
 <div class="split"><svg viewBox="0 0 8 8"><path d="M2 3l2-2 2 2zM2 5l2 2 2-2z"/></svg></div>
 <div class="detail">
  <div class="cap"><h3>详细信息</h3><button aria-label="详细信息"><svg><use href="#sq"/></svg></button><button aria-label="预览图"><svg><use href="#preview"/></svg></button><svg class="tri" viewBox="0 0 10 8"><path d="M3 5l2-3 2 3z"/></svg></div>
  <div class="rows"><table><tbody><tr><th>参照名</th><td class="w">楼梯间</td></tr><tr><th>状态</th><td>已加载</td></tr><tr><th>大小</th><td>34.3 KB</td></tr><tr><th>类型</th><td class="w">附着</td></tr></tbody></table>
  <div class="vs"><svg viewBox="0 0 10 10"><path d="M3 6l2-2 2 2"/></svg><i></i><svg viewBox="0 0 10 10"><path d="M3 4l2 2 2-2"/></svg></div></div>
  <div class="hs big"><svg viewBox="0 0 10 8"><path d="M6 2L4 4l2 2"/></svg><i></i><svg viewBox="0 0 10 8"><path d="M4 2l2 2-2 2"/></svg></div>
 </div>
 <div class="lens">
  <svg class="peek" viewBox="0 0 30 116"><path d="M7 40v14M1 47h13M5 42l2-2 2 2M5 52l2 2 2-2M12 45l2 2-2 2" class="k"/><path d="M3 63q8-5 11 3-1 9-11 6" class="k"/><path d="M0 79h11v19H0z" fill="#a9cfee" stroke="#3c85c4"/></svg>
  <div class="lh">文件参照</div>
  <ul><li><i></i><span>参照名</span></li><li><svg><use href="#proj"/></svg><span>动态门窗*</span></li><li><svg><use href="#dwg"/></svg><span>G户型</span></li><li><svg><use href="#dwg"/></svg><span>G'户型</span></li><li class="sel"><svg><use href="#dwg"/></svg><span>楼梯间</span></li></ul>
  <svg class="ptr" viewBox="0 0 8 11"><path d="M1 0v9l2-2 1.500 3.500 1.500-.5-1.500-3.500h3z"/></svg>
 </div>
</aside>
</main>
<footer class="status">展开项目时目标驱动器上没有足够的空间，展开所有项目之前，需要清除一些文件。</footer>
</div>
</body>
</html>
```

FILE: styles.css
```css
* { box-sizing: border-box; }
body { margin: 0; background: #e4e8ee; color: #222; font: 7px/10px "Noto Sans", "Noto Sans CJK SC", sans-serif; }
button, select, input, h2, h3 { font: inherit; color: inherit; margin: 0; padding: 0; border: 0; background: none; border-radius: 0; white-space: nowrap; }
svg { display: block; fill: none; stroke: #555; stroke-width: 1; flex: none; }
i { display: block; }
.defs { position: absolute; width: 0; height: 0; }
.app { display: flex; flex-direction: column; height: 100vh; margin-right: 5px; background: #686868; overflow: hidden; }

.head { display: grid; grid-template: 16px 14px / 21px 1fr; }
.logo { grid-row: 1 / 3; background: linear-gradient(#fff 2px, #777 2px, #b5b5b5 25px, #686868 25px); }
.logo svg { width: 21px; height: 24px; stroke: none; }
.title { background: #fdfdfd; display: flex; align-items: center; gap: 14px; padding-left: 244px; padding-bottom: 3px; }
.wctl { display: flex; gap: 19px; margin-left: auto; padding-right: 8px; }
.wctl svg { width: 8px; height: 8px; stroke: #888; }
.menu { background: linear-gradient(#606060, #8a8a8a 40%, #747474); color: #f4f4f4; display: flex; align-items: center; padding-left: 8px; }
.items { display: flex; justify-content: space-between; flex: 0 1 447px; }
.dctl { margin-left: auto; }
.dctl svg { width: 28px; height: 8px; stroke: #1c1c1c; stroke-width: 1.3; }

.bar { display: flex; align-items: center; height: 13px; margin-bottom: 2px; background: #ececec; padding-left: 1px; }
.one { margin-right: 7px; }
.two { margin-right: 26px; }
.ib { width: 14px; height: 13px; display: grid; place-items: center; flex: none; }
.ib svg { width: 11px; height: 11px; }
.wide { width: 16px; }
.sep { width: 1px; height: 10px; margin: 0 1px; background: #777; flex: none; }
.dd { width: 8px; height: 2px; border: solid transparent; border-width: 0 3px; border-top: 2px solid #444; flex: none; }
.grip { width: 4px; align-self: stretch; margin: 0 1px; background: repeating-linear-gradient(#444 0 3px, #888 3px 4px); flex: none; }
.combo { display: flex; align-items: center; gap: 1px; height: 12px; background: #e2e2e2; border: 1px solid #c2c2c2; position: relative; flex: none; }
.combo::after { content: ""; position: absolute; right: 5px; top: 2px; width: 4px; height: 4px; border: solid #555; border-width: 0 1px 1px 0; transform: rotate(45deg); pointer-events: none; }
.combo svg { width: 9px; height: 9px; }
.combo select { appearance: none; flex: 1; min-width: 0; height: 10px; padding-left: 4px; line-height: 10px; }
.combo select.in { padding-left: 10px; }
.rule { width: 24px; height: 1px; background: #444; flex: none; }
.c72 { flex: 0 1 73px; }
.c104 { width: 104px; }
.c90 { width: 90px; margin-right: 3px; }
.c80 { width: 78px; margin-right: 3px; }
.c68 { flex: 1; }
.layer { width: 180px; padding-left: 3px; }
.layer select { padding-left: 1px; }
.off { background: #c4c4c4; color: #888; }
.off select { opacity: 1; color: #888; }

.main { flex: 1; min-height: 0; display: grid; grid-template-columns: 58px minmax(0, 1fr) 122px; gap: 4px; padding-top: 1px; }
.tools { margin: 2px 0 4px; background: #fbfbfb; overflow: hidden; display: flex; flex-direction: column; }
.tools h2 { height: 13px; line-height: 13px; padding-left: 4px; background: #ababab; margin-bottom: 2px; flex: none; }
.tools button { display: flex; align-items: center; width: 100%; flex: none; text-align-last: justify; }
.tools .g { display: block; height: 12px; padding: 0 20px 0 10px; line-height: 11px; background: linear-gradient(#fcfcfc, #ebebeb); border-bottom: 1px solid #ddd; position: relative; }
.tools .g::after { content: ""; position: absolute; right: 5px; top: 5px; border: 2px solid transparent; border-top-color: #555; border-bottom: 0; }
.tools .g:nth-of-type(even) { height: 11px; }
.tools .g.cut { height: 6px; overflow: hidden; }
.set { border-bottom: 1px solid #79bcd8; }
.set.last { border: 0; }
.set button { height: 12px; }
.set svg { width: 10px; height: 10px; }
.set span { width: 28px; }
.set .on { background: #b9dff0; }
.cats { margin-top: auto; }
.cats button { height: 15px; gap: 4px; padding-left: 2px; border-bottom: 1px solid #ccc; background: linear-gradient(#fff, #eee); }
.cats .on { height: 13px; background: linear-gradient(#d4eef6, #7cc2d8); }
.cats svg { width: 12px; height: 12px; }
.cats span { width: 28px; }

.center { display: flex; flex-direction: column; gap: 3px; min-height: 0; }
.work { flex: 1; min-height: 0; display: flex; gap: 3px; }
.vbar { width: 14px; display: flex; flex-direction: column; flex: none; }
.vbar.r { width: 15px; }
.vgrip { height: 6px; background: repeating-linear-gradient(90deg, #333 0 4px, #666 4px 5px); border: solid #686868; border-width: 1px 3px 2px; flex: none; }
.vset { background: #ececec; }
.vset button { width: 100%; height: 13px; display: grid; place-items: center; }
.vset svg { width: 10px; height: 10px; }
.grow { flex: 1; }
.doc { flex: 1; min-width: 0; display: flex; flex-direction: column; border: solid #ddd; border-width: 0 1px; }
.tabs { height: 13px; background: #f3f3f3; display: flex; flex: none; padding-top: 1px; border-bottom: 2px solid #dfe3e6; }
.tabs button { width: 72px; height: 10px; background: linear-gradient(#e8f5fa, #8fcfe4); clip-path: polygon(8px 0, 60px 0, 72px 100%, 0 100%); padding-right: 12px; }
.view { flex: 1; min-height: 0; display: flex; background: #202730; }
.cad { flex: 1; min-width: 0; width: 100%; height: 100%; }
.sv, .vs { width: 10px; background: #efefef; display: flex; flex-direction: column; flex: none; }
.sv svg, .vs svg { width: 10px; height: 10px; }
.sv i { height: 9px; margin: auto 1px 5px; background: #cbcbcb; }
.sheets { height: 11px; background: #efefef; display: flex; align-items: center; gap: 3px; flex: none; line-height: 11px; }
.sheets svg { width: 36px; height: 8px; }
.sheets .on { background: #202730; color: #fff; padding: 0 5px 0 4px; clip-path: polygon(0 0, 100% 0, 85% 100%, 15% 100%); }
.sh { flex: 0 1 175px; margin-left: auto; display: flex; align-items: center; background: #f4f4f4; }
.sheets .sh svg, .hs svg { width: 10px; height: 8px; }
.sh i { width: 10px; height: 8px; background: #ccc; margin-right: auto; }

.ax { stroke: #777f88; stroke-width: 1; }
.ax circle { stroke: #a4abb1; stroke-width: .8; }
.dimmer { stroke: #4a515a; }
.wall { stroke: #8f969e; }
.thin { stroke: #69717a; stroke-width: .8; }
.core { stroke: #8f969e; stroke-width: 2; }
.bright { stroke: #b2b7bc; }
.green { stroke: #71947b; }
.green.fill { fill: #315a3a; }
.cad text { stroke: none; fill: #e8eaec; font-size: 5px; text-anchor: middle; font-family: "Liberation Sans Narrow", "Liberation Sans", "Noto Sans CJK SC", sans-serif; }
.cad .bub text { font-size: 6px; font-weight: bold; }
.cad .num text { font-size: 4px; font-weight: bold; }
.cad .tag text { fill: #a9b0b6; font-size: 4px; }
.unit circle { stroke: #c6cacd; }
.cad .unit text { font-size: 9px; }
.cad .vp { font-size: 7px; fill: #05080b; text-anchor: start; }
.compass circle { stroke: #4b525a; stroke-width: 5; }
.compass path, .compass rect { fill: #9b9fa4; stroke: none; }
.compass rect { fill: #777d83; }
.cad .compass text { font-size: 7px; fill: #a2a7ac; }
.cad .compass .up { fill: #4c535a; font-size: 9px; }
.cad .compass .wcs { fill: #c2c6ca; font-size: 6px; }
.compass .tri { fill: #ccc; }
.ucs { stroke: #bcc0c4; }
.cross { stroke: #f5f7f8; stroke-width: 1; }
.pick { stroke: #cdd1d5; }

.cmd { height: 33px; display: flex; flex: none; }
.side { width: 12px; background: #777; }
.side svg { width: 12px; height: 33px; stroke: #eee; }
.log { flex: 1; background: #c8c8c8; padding-left: 2px; }
.log pre { margin: 0; height: 21px; padding: 1px 2px 0; font: 7px/9px "Liberation Mono", "Noto Sans CJK SC", monospace; }
.prompt { display: flex; align-items: center; gap: 5px; height: 12px; background: #fff; padding-left: 3px; }
.prompt svg { width: 16px; height: 10px; stroke: #888; }
.prompt input { flex: 1; outline: 0; font-style: italic; height: 10px; }
.prompt input::placeholder { color: #999; }

.refs { position: relative; background: #eee; margin-top: 2px; display: flex; flex-direction: column; padding: 0 4px; min-height: 0; }
.refs h2 { margin: 0 -4px 6px; height: 13px; line-height: 13px; padding-left: 7px; background: #a6a6a6; border-left: 1px dotted #333; flex: none; }
.rbar { height: 15px; width: 74px; border: 1px solid #ccc; display: flex; align-items: center; justify-content: space-around; margin-bottom: 7px; flex: none; }
.rbar svg { width: 11px; height: 11px; }
.list { flex: 1; min-height: 0; background: #fdfdfd; display: flex; flex-direction: column; border: 1px solid #ccc; border-top: 0; }
.cap { height: 11px; background: linear-gradient(#bbb, #999); display: flex; align-items: center; justify-content: flex-end; gap: 2px; padding-right: 2px; flex: none; }
.cap button svg { width: 8px; height: 8px; }
.cap button { background: #eee; border: 1px solid #777; }
.cap .tri { width: 10px; height: 8px; fill: #222; stroke: none; margin-left: 3px; }
.cap h3 { margin-right: auto; padding-left: 4px; font-weight: bold; }
table { border-collapse: collapse; }
th { font-weight: normal; text-align: left; padding: 0; }
td { padding: 0; }
.list table { margin: 2px 0 0 76px; }
.list td { padding-left: 7px; height: 13px; }
.list th { height: 11px; }
.hs { display: flex; align-items: center; height: 9px; background: #f0f0f0; margin-top: auto; flex: none; }
.hs i { width: 22px; height: 8px; background: #cfcfcf; margin-right: auto; }
.split { height: 8px; display: grid; place-items: center; flex: none; }
.split svg { width: 8px; height: 8px; stroke: none; fill: #777; }
.detail { margin-bottom: 26px; border: 1px solid #ccc; flex: none; }
.rows { display: flex; }
.rows table { flex: 1; }
.rows th { width: 48px; padding-left: 2px; height: 14px; }
.rows td { padding-left: 2px; background: #e8e8e8; }
.rows .w { background: #fdfdfd; }
.vs i { height: 22px; margin: 0 0 auto; background: #cbcbcb; }
.big { height: 11px; padding-right: 10px; }
.big i { flex: 1; margin: 0; }

.lens { position: absolute; left: -35px; top: 25px; width: 119px; height: 119px; border-radius: 50%; border: 2px solid #1b1b1b; overflow: hidden; background: linear-gradient(90deg, #ececec 10px, #777 10px 14px, #eee 14px 20px, #a9a9a9 20px 24px, #fcfcfc 24px); }
.peek { position: absolute; left: 0; top: 0; width: 30px; height: 116px; }
.k { stroke: #444; }
.lh { height: 10px; line-height: 10px; padding-left: 34px; background: #aaa; font-size: 10px; font-weight: bold; }
.lens ul { list-style: none; margin: 2px 0 0; padding: 0 28px 0 29px; font-size: 11px; line-height: 19px; }
.lens li { display: flex; align-items: center; gap: 7px; height: 19px; white-space: nowrap; }
.lens li svg, .lens li i { width: 14px; height: 14px; flex: none; }
.lens .sel span { background: #eaeaea; flex: 1; }
.ptr { position: absolute; left: 59px; top: 60px; width: 8px; height: 11px; fill: #fff; stroke-width: .8; }

.status { height: 9px; background: #858585; color: #111; font-size: 7px; line-height: 8px; overflow: hidden; white-space: nowrap; flex: none; border-top: 1px solid #333; }
```
